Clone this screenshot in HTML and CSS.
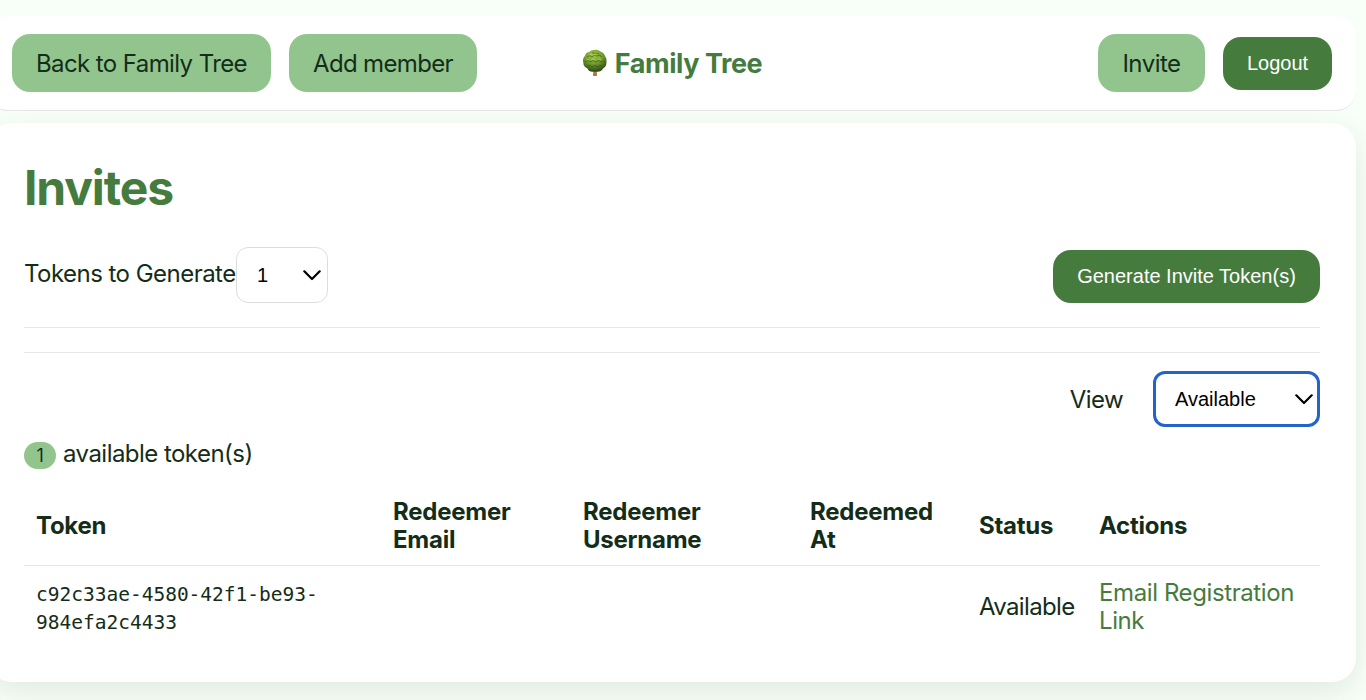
FILE: index.html
```html
<!DOCTYPE html>
<html lang="en">
<head>
<meta charset="utf-8">
<title>Family Tree</title>
<link rel="stylesheet" href="styles.css">
</head>
<body>
<header class="topbar">
  <nav class="nav-group">
    <a class="btn-soft btn-back">Back to Family Tree</a>
    <a class="btn-soft btn-add">Add member</a>
  </nav>
  <div class="brand">
    <svg class="tree" viewBox="0 0 26 28">
      <defs><radialGradient id="leaf" cx="45%" cy="25%" r="75%"><stop offset="0" stop-color="#a3c844"/><stop offset=".5" stop-color="#749f31"/><stop offset="1" stop-color="#2c4713"/></radialGradient></defs>
      <path d="M11.300 20h3.600l-.2 3 .4 3.500q-2 1-4.200 0l.5-3.500z" fill="#a9783f"/>
      <path d="M12.500 1Q16 .2 18.500 2.500 22 3.500 23 7q2.300 3 1.500 6.500-.3 4.500-3.500 6-2 3.500-6 3.200h-4q-4 .3-5.500-3.200Q1.500 18 1.300 13.500.2 10 2.800 7 4 3.200 7.500 2.700 9.500.5 12.500 1z" fill="url(#leaf)"/>
      <path d="M5 8q3-3 5 0 2-3 5-1 3-2 5 1M3 13q3-3 5 0 3-3 6 0 3-3 5 0 2-2 4 0M5 17q3-2 5 1 3-3 6 0 2-3 4-1M10 4q2-1 4 1 2-1 3 0" fill="none" stroke="#34551a" stroke-width="1" opacity=".65"/>
      <path d="M7 6q2-1.500 3 0M12 6q2-1.500 3 0M9 11q2-2 4 0M16 10.500q2-1.500 3 0M4.500 11q1-1 2.500 0" fill="none" stroke="#bddb65" stroke-width="1" opacity=".7"/>
    </svg>
    <span class="brand-name">Family Tree</span>
  </div>
  <div class="nav-group nav-end">
    <a class="btn-soft btn-invite">Invite</a>
    <button class="btn-solid btn-logout">Logout</button>
  </div>
</header>
<main class="card">
  <h1 class="title">Invites</h1>
  <section class="generate">
    <label class="gen-label">Tokens to Generate</label>
    <div class="select select-count"><span>1</span><svg class="chev" viewBox="0 0 18 11"><path d="M1.300 1.300 9 9l7.700-7.700"/></svg></div>
    <button class="btn-solid btn-generate">Generate Invite Token(s)</button>
  </section>
  <section class="filter">
    <label class="view-label">View</label>
    <div class="select select-view"><span>Available</span><svg class="chev" viewBox="0 0 18 11"><path d="M1.300 1.300 9 9l7.700-7.700"/></svg></div>
  </section>
  <p class="summary"><span class="badge">1</span><span class="summary-text">available token(s)</span></p>
  <table class="tokens">
    <colgroup><col class="c1"><col class="c2"><col class="c3"><col class="c4"><col class="c5"><col class="c6"></colgroup>
    <thead><tr><th>Token</th><th>Redeemer<br>Email</th><th>Redeemer<br>Username</th><th>Redeemed<br>At</th><th>Status</th><th>Actions</th></tr></thead>
    <tbody><tr><td class="mono">c92c33ae-4580-42f1-be93-<br>984efa2c4433</td><td></td><td></td><td></td><td class="status">Available</td><td><a class="link">Email Registration<br>Link</a></td></tr></tbody>
  </table>
</main>
</body>
</html>
```
FILE: styles.css
```css
* { box-sizing: border-box; }
body {
  margin: 0;
  padding-top: 16px;
  height: 700px;
  overflow: hidden;
  background: #f8fff8;
  color: #142d19;
  font: 24px/28px Inter, sans-serif;
}
.topbar {
  display: grid;
  grid-template-columns: 1fr auto 1fr;
  align-items: center;
  height: 95px;
  margin: 0 10px 12px -12px;
  padding: 0 24px;
  background: #fff;
  border-bottom: 1px solid #e4e7e4;
  border-radius: 20px;
}
.nav-group { display: flex; align-items: center; gap: 18px; }
.nav-end { justify-content: flex-end; }
.btn-soft, .btn-solid {
  display: flex;
  align-items: center;
  justify-content: center;
  border-radius: 18px;
  white-space: nowrap;
}
.btn-soft { height: 58px; padding-top: 2px; background: #92c58d; }
.btn-back { width: 259px; letter-spacing: -0.6px; }
.btn-add { width: 188px; letter-spacing: -0.65px; }
.btn-invite { width: 107px; letter-spacing: -0.5px; }
.btn-solid {
  height: 53px;
  padding: 0;
  border: 0;
  background: #467b3e;
  color: #fff;
  font: 20px "Liberation Sans", sans-serif;
}
.btn-logout { width: 109px; }
.btn-generate { width: 267px; margin-left: auto; }
.brand { display: flex; align-items: center; gap: 7px; color: #467b3e; font-size: 27px; font-weight: 700; letter-spacing: -0.45px; }
.brand-name { padding-top: 2px; }
.tree { width: 26px; height: 28px; }
.card {
  height: 559px;
  margin: 0 10px 0 -12px;
  padding: 36px 36px 0;
  background: #fff;
  border-radius: 24px;
  box-shadow: 0 10px 30px rgba(20, 45, 25, 0.1);
}
.title { margin: 0; color: #467b3e; font-size: 48px; line-height: 58px; letter-spacing: -1.15px; }
.generate {
  display: flex;
  align-items: flex-end;
  height: 111px;
  padding-bottom: 24px;
  border-bottom: 1px solid #e6e8e6;
}
.gen-label { width: 212px; margin-bottom: 15px; white-space: nowrap; letter-spacing: -0.53px; }
.select {
  display: flex;
  align-items: center;
  justify-content: space-between;
  height: 56px;
  border: 1px solid #dcdddc;
  border-radius: 12px;
  color: #000;
  font: 20px "Liberation Sans", sans-serif;
}
.select-count { width: 92px; padding: 0 6px 0 20px; }
.select-view { width: 167px; padding: 0 4px 0 19px; border: 3px solid #2463cb; }
.chev { width: 18px; height: 11px; fill: none; stroke: #000; stroke-width: 2.2; stroke-linecap: round; stroke-linejoin: round; }
.filter {
  display: flex;
  align-items: center;
  justify-content: flex-end;
  margin-top: 24px;
  padding-top: 18px;
  border-top: 1px solid #e6e8e6;
}
.view-label { padding-top: 2px; margin-right: 30px; letter-spacing: -0.6px; }
.summary { display: flex; align-items: center; gap: 7px; margin: 12px 0 17px; letter-spacing: -0.54px; }
.badge {
  width: 32px;
  height: 27px;
  margin-top: 3px;
  border-radius: 14px;
  background: #92c58d;
  font-size: 18px;
  line-height: 27px;
  text-align: center;
}
.tokens { width: 1296px; table-layout: fixed; border-collapse: collapse; }
.c1 { width: 357px; }
.c2 { width: 190px; }
.c3 { width: 227px; }
.c4 { width: 169px; }
.c5 { width: 120px; }
.c6 { width: 233px; }
th, td { text-align: left; vertical-align: middle; white-space: nowrap; }
th { padding: 12px 12px 11px; border-bottom: 1px solid #e4e6e4; letter-spacing: -0.25px; }
td { padding: 13px 12px 11px; }
.tokens .mono { padding: 15px 12px 9px; font: 19.500px/28px "DejaVu Sans Mono", monospace; }
.status { letter-spacing: -0.65px; }
.link { color: #467b3e; letter-spacing: -0.4px; }
```
